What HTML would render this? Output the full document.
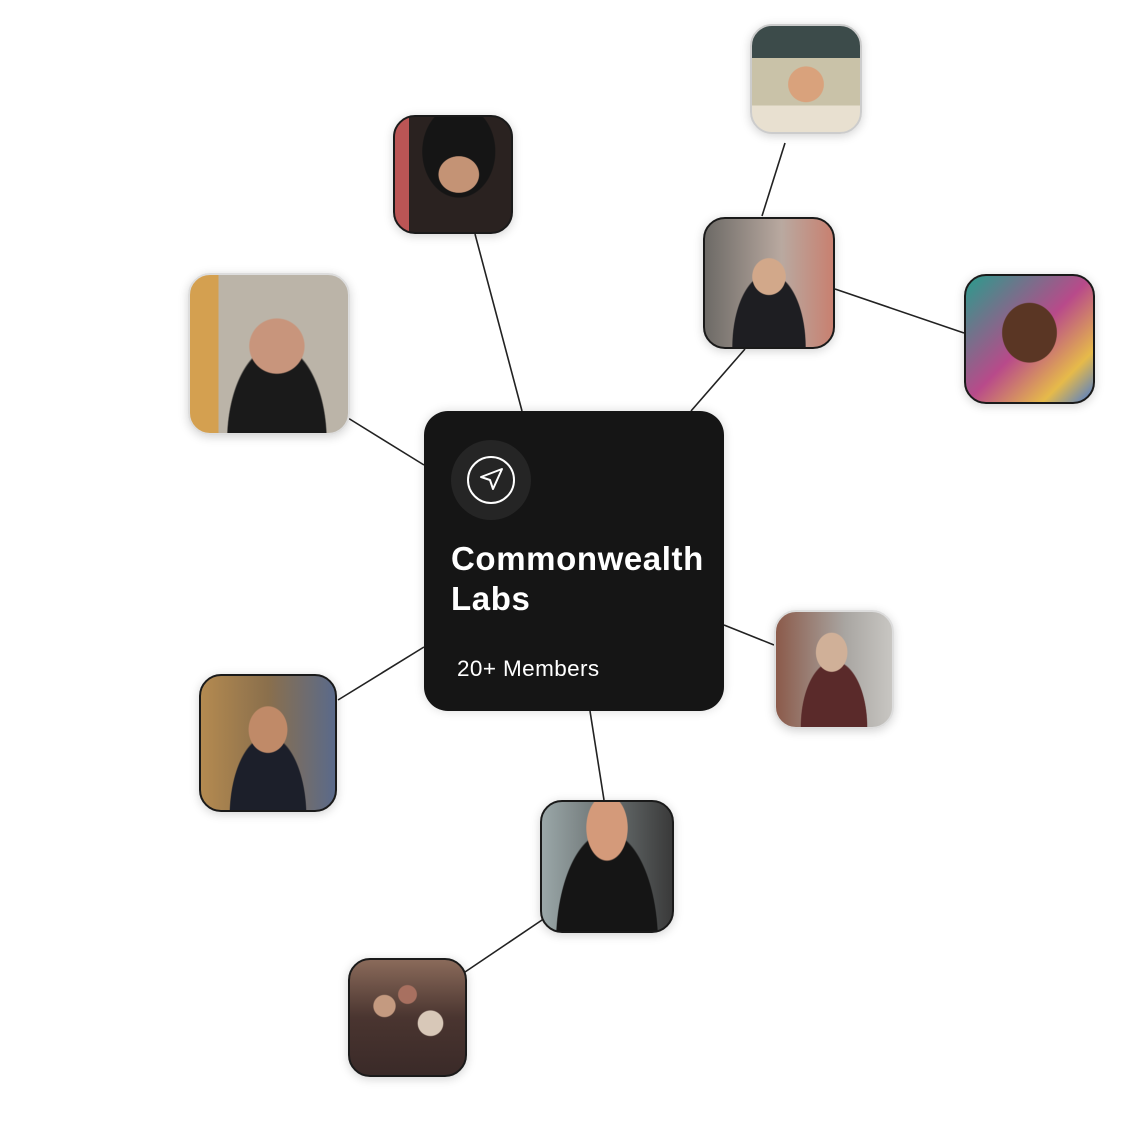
<!DOCTYPE html>
<html><head><meta charset="utf-8"><style>
html,body{margin:0;padding:0;background:#fff;}
body{width:1144px;height:1124px;position:relative;overflow:hidden;font-family:"Liberation Sans",sans-serif;}
.a{position:absolute;border:2px solid #1a1a1a;border-radius:22px;box-sizing:border-box;box-shadow:0 2px 10px rgba(0,0,0,.18);overflow:hidden;}
.card{position:absolute;left:424px;top:411px;width:300px;height:300px;background:#151515;border-radius:24px;box-shadow:0 0 10px rgba(0,0,0,.15);}
.ic{position:absolute;left:27px;top:29px;width:80px;height:80px;border-radius:50%;background:#252525;}
.t{position:absolute;left:27px;top:128px;color:#fff;font-weight:bold;font-size:33px;line-height:40px;letter-spacing:0.6px;}
.m{position:absolute;left:33px;top:245px;color:#fff;font-size:22.5px;letter-spacing:0.4px;}
</style></head><body>
<svg width="1144" height="1124" style="position:absolute;left:0;top:0">
<g stroke="#222" stroke-width="1.6">
<line x1="785" y1="143" x2="762" y2="216"/>
<line x1="475" y1="234" x2="522" y2="411"/>
<line x1="745" y1="349" x2="691" y2="411"/>
<line x1="835" y1="289" x2="964" y2="333"/>
<line x1="348" y1="418" x2="424" y2="465"/>
<line x1="724" y1="625" x2="774" y2="645"/>
<line x1="338" y1="700" x2="424" y2="647"/>
<line x1="590" y1="711" x2="604" y2="800"/>
<line x1="545" y1="918" x2="465" y2="972"/>
</g></svg>
<div class="a" style="left:750px;top:24px;width:112px;height:110px;background:radial-gradient(circle at 50% 55%,#d9a27c 0 22%,transparent 23%),linear-gradient(180deg,#3c4b4a 0 30%,#c9c2a8 30% 75%,#e8e0d0 75%);border-color:#ccc"></div>
<div class="a" style="left:393px;top:115px;width:120px;height:119px;background:radial-gradient(ellipse at 55% 50%,#c49375 0 22%,transparent 23%),radial-gradient(ellipse at 55% 30%,#151515 0 40%,transparent 41%),linear-gradient(90deg,#b55 0 12%,#2a2220 12%)"></div>
<div class="a" style="left:703px;top:217px;width:132px;height:132px;background:radial-gradient(ellipse at 50% 45%,#d2a88a 0 18%,transparent 19%),radial-gradient(ellipse at 50% 100%,#1e1e22 0 40%,transparent 41%),linear-gradient(90deg,#6d6a66,#b9a9a0 60%,#c88070)"></div>
<div class="a" style="left:964px;top:274px;width:131px;height:130px;background:radial-gradient(ellipse at 50% 45%,#5a3624 0 30%,transparent 31%),linear-gradient(135deg,#2a9c8c,#b84a8a 50%,#e6ba4a 80%,#4a7ad0)"></div>
<div class="a" style="left:188px;top:273px;width:162px;height:162px;background:radial-gradient(ellipse at 55% 45%,#c8957c 0 22%,transparent 23%),radial-gradient(ellipse at 55% 105%,#1a1a1a 0 40%,transparent 41%),linear-gradient(90deg,#d4a050 0 18%,#bbb4a8 18%);border-color:#ddd"></div>
<div class="a" style="left:774px;top:610px;width:120px;height:119px;background:radial-gradient(ellipse at 48% 35%,#d0b098 0 18%,transparent 19%),radial-gradient(ellipse at 50% 100%,#5a2a2a 0 40%,transparent 41%),linear-gradient(90deg,#8b5a4a,#a9a6a2 60%,#c8c6c2);border-color:#ddd"></div>
<div class="a" style="left:199px;top:674px;width:138px;height:138px;background:radial-gradient(ellipse at 50% 40%,#c08a68 0 20%,transparent 21%),radial-gradient(ellipse at 50% 105%,#1c1f2a 0 40%,transparent 41%),linear-gradient(90deg,#b48a50,#8a6f4c 50%,#5a6a8a)"></div>
<div class="a" style="left:540px;top:800px;width:134px;height:133px;background:radial-gradient(ellipse at 50% 20%,#d49a7a 0 22%,transparent 23%),radial-gradient(ellipse at 50% 110%,#151515 0 55%,transparent 56%),linear-gradient(90deg,#9aa7a8,#3a3a3a)"></div>
<div class="a" style="left:348px;top:958px;width:119px;height:119px;background:radial-gradient(circle at 30% 40%,#c49a80 0 10%,transparent 11%),radial-gradient(circle at 70% 55%,#d8c8b8 0 12%,transparent 13%),radial-gradient(circle at 50% 30%,#a87060 0 9%,transparent 10%),linear-gradient(180deg,#8a6a5a,#4a3530 50%,#3a2a28)"></div>
<div class="card">
<div class="ic"><svg width="80" height="80" viewBox="0 0 80 80"><circle cx="40" cy="40" r="23" fill="none" stroke="#fff" stroke-width="2"/><path d="M51 29 L30 37 L39 40 L42 49 Z" fill="none" stroke="#fff" stroke-width="2" stroke-linejoin="round"/></svg></div>
<div class="t">Commonwealth<br>Labs</div>
<div class="m">20+ Members</div>
</div>
</body></html>
